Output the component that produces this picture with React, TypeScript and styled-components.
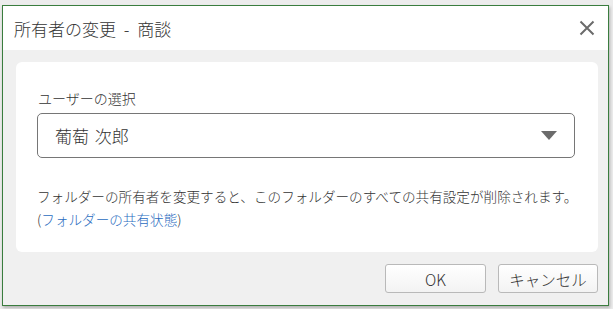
import React from "react";
import styled, { createGlobalStyle } from "styled-components";

const Global = createGlobalStyle`
  html, body { margin: 0; padding: 0; background: #ececec; }
  body { font-family: "Noto Sans CJK JP", "Noto Sans", sans-serif; color: #333; }
  #root { width: 613px; height: 309px; }
`;

const Dialog = styled.div`
  box-sizing: border-box;
  margin: 5px 0 0 2px;
  width: 607px;
  height: 301px;
  border: 1px solid #3a7d3e;
  background: #f0f0f0;
  box-shadow: 1px 2px 3px rgba(0, 0, 0, 0.25);
  display: flex;
  flex-direction: column;
`;

const Header = styled.div`
  height: 44px;
  background: #fff;
  display: flex;
  align-items: center;
  justify-content: space-between;
  padding: 0 12px 0 11px;
`;

const Title = styled.h1`
  margin: 0;
  font-size: 17px;
  font-weight: 300;
  word-spacing: 4px;
  color: #333;
  white-space: nowrap;
`;

const CloseButton = styled.button`
  border: 0;
  background: none;
  padding: 0;
  width: 18px;
  height: 18px;
  display: flex;
  align-items: center;
  justify-content: center;
  cursor: pointer;
`;

const Body = styled.div`
  flex: 1;
  padding: 12px 10px 0 13px;
  display: flex;
  flex-direction: column;
`;

const Card = styled.div`
  box-sizing: border-box;
  height: 190px;
  background: #fff;
  border-radius: 6px;
  padding: 26px 23px 0 21px;
`;

const Label = styled.div`
  font-size: 14px;
  font-weight: 300;
  line-height: 20px;
  margin-bottom: 5px;
  padding-left: 1px;
`;

const Select = styled.div`
  box-sizing: border-box;
  height: 45px;
  border: 1px solid #767676;
  border-radius: 5px;
  display: flex;
  align-items: center;
  justify-content: space-between;
  padding: 0 17px 0 17px;
`;

const SelectValue = styled.span`
  font-size: 17px;
  font-weight: 300;
  word-spacing: 2px;
  color: #333;
`;

const Note = styled.p`
  margin: 27px 0 0;
  font-size: 13.6px;
  font-weight: 300;
  line-height: 23px;
  color: #333;
  white-space: nowrap;
`;

const Link = styled.a`
  color: #2a6cc0;
  text-decoration: none;
`;

const Footer = styled.div`
  display: flex;
  justify-content: flex-end;
  gap: 12px;
  padding: 12px 0 0;
`;

const Button = styled.button<{ $w: number }>`
  box-sizing: border-box;
  width: ${(p) => p.$w}px;
  height: 29px;
  border: 1px solid #b9b9b9;
  border-radius: 3px;
  background: linear-gradient(#ffffff, #f3f3f3);
  font-family: "Noto Sans CJK JP", "Noto Sans", sans-serif;
  font-size: 15.5px;
  font-weight: 300;
  color: #333;
  padding: 0;
`;

export default function App() {
  return (
    <>
      <Global />
      <Dialog>
        <Header>
          <Title>所有者の変更 - 商談</Title>
          <CloseButton aria-label="close">
            <svg width="16" height="16" viewBox="0 0 16 16">
              <path d="M1.5 1.5 L14.5 14.5 M14.5 1.5 L1.5 14.5" stroke="#6b6b6b" strokeWidth="2" />
            </svg>
          </CloseButton>
        </Header>
        <Body>
          <Card>
            <Label>ユーザーの選択</Label>
            <Select>
              <SelectValue>葡萄 次郎</SelectValue>
              <svg width="16" height="9" viewBox="0 0 16 9">
                <path d="M0 0 H16 L8 9 Z" fill="#6b6b6b" />
              </svg>
            </Select>
            <Note>
              フォルダーの所有者を変更すると、このフォルダーのすべての共有設定が削除されます。
              <br />(<Link href="#">フォルダーの共有状態</Link>)
            </Note>
          </Card>
          <Footer>
            <Button $w={101}>OK</Button>
            <Button $w={100}>キャンセル</Button>
          </Footer>
        </Body>
      </Dialog>
    </>
  );
}
